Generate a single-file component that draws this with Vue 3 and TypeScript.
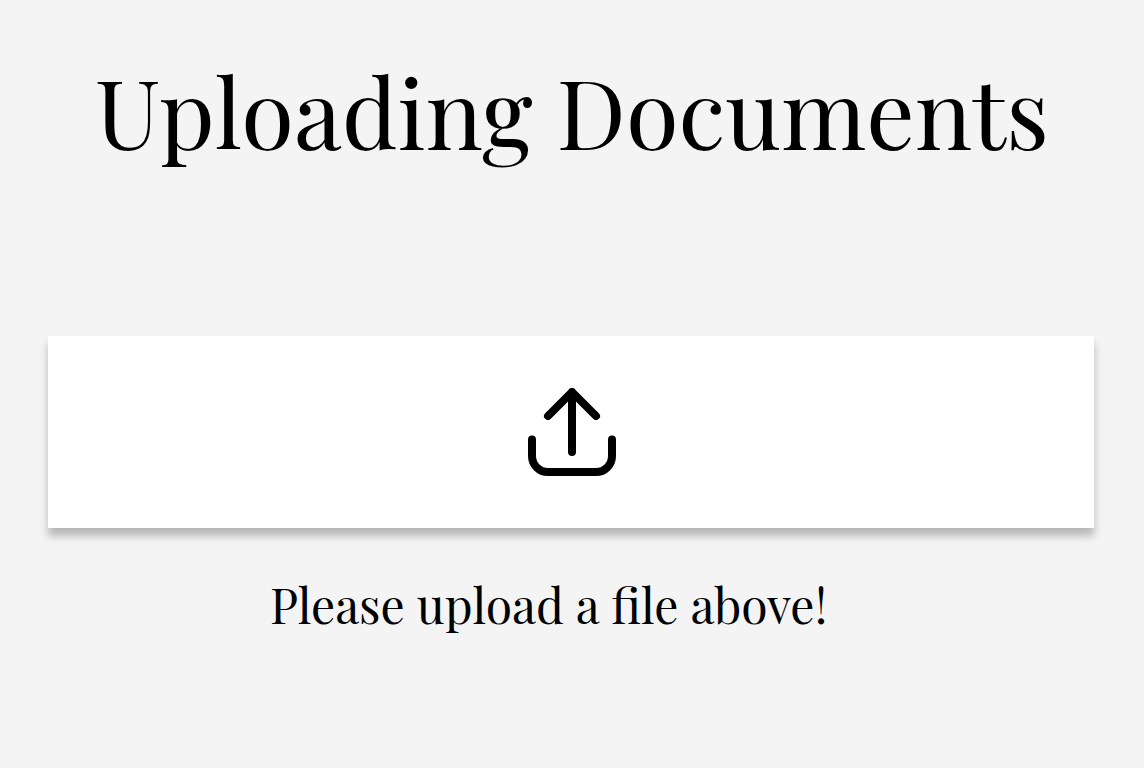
<script setup lang="ts">
const title: string = 'Uploading Documents'
const message: string = 'Please upload a file above!'
</script>

<template>
  <main class="page">
    <h1 class="title">{{ title }}</h1>
    <button class="dropzone" type="button" aria-label="Upload">
      <svg class="icon" viewBox="0 0 88 88">
        <path d="M44 64V4M20 28L44 4L68 28M4 51.500V68A16 16 0 0 0 20 84H68A16 16 0 0 0 84 68V51.500" />
      </svg>
    </button>
    <p class="message">{{ message }}</p>
  </main>
</template>

<style>
body { background: #f4f4f4; }
</style>

<style scoped>
.page {
  box-sizing: border-box;
  height: 768px;
  padding-top: 46px;
  background: #f4f4f4;
  color: #000;
  font-family: "Playfair Display", "Liberation Serif", serif;
}
.title {
  margin: 0 0 162px;
  font-size: 96px;
  line-height: 128px;
  font-weight: 400;
  text-align: center;
  white-space: nowrap;
}
.dropzone {
  display: flex;
  align-items: center;
  justify-content: center;
  box-sizing: border-box;
  width: 1046px;
  height: 192px;
  margin: 0 0 0 48px;
  padding: 0 0 0 2px;
  border: 0;
  background: #fff;
  box-shadow: 0 8px 8px rgba(0, 0, 0, 0.25);
}
.icon {
  width: 88px;
  height: 88px;
  overflow: visible;
  fill: none;
  stroke: #000;
  stroke-width: 8;
  stroke-linecap: round;
  stroke-linejoin: round;
  filter: blur(0.5px);
}
.message {
  margin: 44px 0 0 270px;
  font-size: 48px;
  line-height: 64px;
  white-space: nowrap;
}
</style>
